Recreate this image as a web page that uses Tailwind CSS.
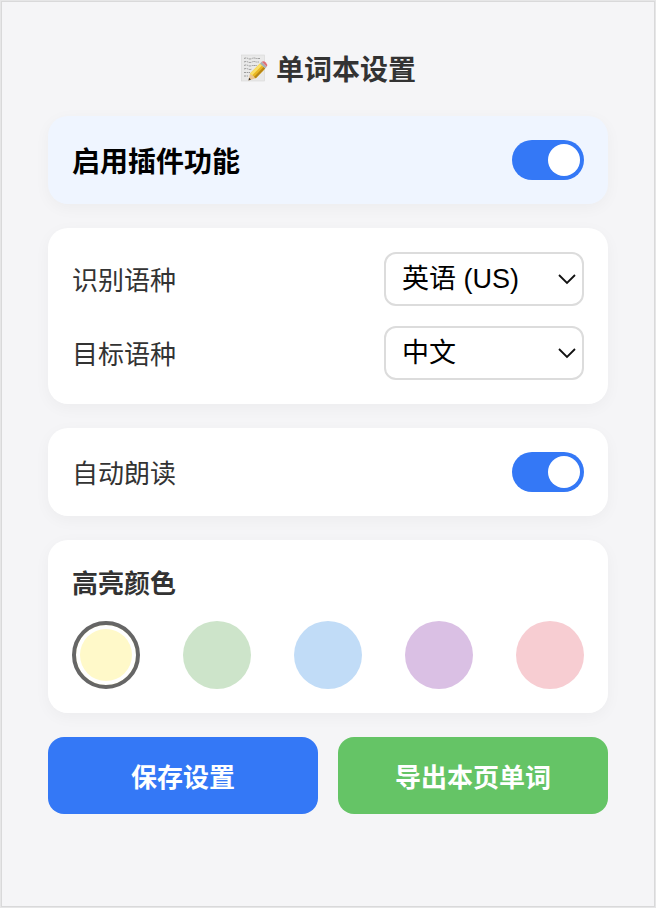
<!DOCTYPE html>
<html lang="zh-CN">
<head>
  <meta charset="UTF-8">
  <meta name="viewport" content="width=device-width, initial-scale=1.0">
  <title>单词本设置</title>
  <script src="https://cdn.jsdelivr.net/npm/@tailwindcss/browser@4"></script>
</head>
<body class="bg-[#e6e6e7] min-h-screen flex flex-col p-px font-['Noto_Sans_CJK_SC',sans-serif] text-[#333]">
  <main class="flex-grow bg-[#f5f5f7] border border-[#d9d9da] px-[46px] pt-[46px] pb-12">
    <!-- Title -->
    <h1 class="flex items-center justify-center gap-2 mb-7 text-[28px] leading-10 font-bold">
      <svg class="w-7 h-7" viewBox="0 0 28 28" aria-hidden="true">
        <rect x="1.500" y="1" width="23" height="26" fill="#e9e9e9" stroke="#d6d6d6" stroke-width=".6" />
        <g fill="none" stroke="#888" stroke-width=".8" stroke-dasharray="2.200 .7 1.200 .6">
          <path d="M4 4.500q2-1 4 0t4 0t4 0h4" />
          <path d="M4 8q2-1 4 0t4 0t4 0h3" />
          <path d="M4 11.500q2-1 4 0t4 0h5" />
          <path d="M4 15q2-1 4 0t4 0" />
          <path d="M4 18.500h6M4 22h4" />
        </g>
        <path d="M8.500 26.500l1.500-7 5.800 4.800z" fill="#ecc590" />
        <path d="M8.500 26.500l.6-2.700 1.900 1.600z" fill="#3b3328" />
        <path d="M10 19.500L20 9.500l5.200 5L15.800 24.300z" fill="#e9b622" />
        <path d="M10 19.500L20 9.500l2 1.900L12.200 21.300z" fill="#f9df67" />
        <path d="M14 22.900L23.600 13l1.600 1.500L15.800 24.300z" fill="#b98714" />
        <path d="M20 9.500l1.700-1.700 5.100 5-1.600 1.700z" fill="#a9b1b4" />
        <path d="M21.700 7.800q2-1.400 4.100.6t1 4.400z" fill="#e07077" />
      </svg>
      单词本设置
    </h1>

    <form class="flex flex-col gap-6">
      <!-- Master switch -->
      <section class="flex items-center justify-between bg-[#eff5ff] rounded-[20px] p-6 shadow-[0_4px_16px_rgba(0,0,0,0.04)]">
        <label for="enablePlugin" class="text-[28px] leading-10 font-bold text-black">启用插件功能</label>
        <input id="enablePlugin" type="checkbox" checked class="appearance-none w-[72px] h-10 p-1 rounded-full bg-[#ccc] checked:bg-[#3478f6] flex checked:justify-end before:content-[''] before:w-8 before:h-8 before:rounded-full before:bg-white cursor-pointer">
      </section>

      <!-- Languages -->
      <section class="flex flex-col gap-5 bg-white rounded-[20px] p-6 shadow-[0_4px_16px_rgba(0,0,0,0.04)]">
        <div class="flex items-center justify-between">
          <label for="sourceLang" class="text-[26px] leading-10">识别语种</label>
          <div class="relative">
            <select id="sourceLang" class="block appearance-none w-[200px] h-[54px] pl-4 pr-10 bg-white border-2 border-[#dcdcdc] rounded-xl font-['Liberation_Sans','Noto_Sans_CJK_SC',sans-serif] text-[27px] text-black">
              <option>英语 (US)</option>
              <option>英语 (UK)</option>
            </select>
            <svg class="absolute right-2 top-5 w-[18px] h-4 pointer-events-none" viewBox="0 0 18 16" fill="none" stroke="#111" stroke-width="1.800" aria-hidden="true"><path d="M1 3l8 8 8-8" /></svg>
          </div>
        </div>
        <div class="flex items-center justify-between">
          <label for="targetLang" class="text-[26px] leading-10">目标语种</label>
          <div class="relative">
            <select id="targetLang" class="block appearance-none w-[200px] h-[54px] pl-4 pr-10 bg-white border-2 border-[#dcdcdc] rounded-xl font-['Liberation_Sans','Noto_Sans_CJK_SC',sans-serif] text-[27px] text-black">
              <option>中文</option>
              <option>英语</option>
            </select>
            <svg class="absolute right-2 top-5 w-[18px] h-4 pointer-events-none" viewBox="0 0 18 16" fill="none" stroke="#111" stroke-width="1.800" aria-hidden="true"><path d="M1 3l8 8 8-8" /></svg>
          </div>
        </div>
      </section>

      <!-- Auto read -->
      <section class="flex items-center justify-between bg-white rounded-[20px] p-6 shadow-[0_4px_16px_rgba(0,0,0,0.04)]">
        <label for="autoRead" class="text-[26px] leading-10">自动朗读</label>
        <input id="autoRead" type="checkbox" checked class="appearance-none w-[72px] h-10 p-1 rounded-full bg-[#ccc] checked:bg-[#3478f6] flex checked:justify-end before:content-[''] before:w-8 before:h-8 before:rounded-full before:bg-white cursor-pointer">
      </section>

      <!-- Highlight color -->
      <fieldset class="bg-white rounded-[20px] p-6 shadow-[0_4px_16px_rgba(0,0,0,0.04)]" aria-labelledby="colorTitle">
        <h2 id="colorTitle" class="mb-[21px] text-[26px] leading-9 font-bold">高亮颜色</h2>
        <div class="flex justify-between">
          <input type="radio" name="color" aria-label="黄色" checked class="appearance-none w-[68px] h-[68px] rounded-full bg-[#fff9c9] checked:border-4 checked:border-[#666] checked:shadow-[inset_0_0_0_4px_#fff] cursor-pointer">
          <input type="radio" name="color" aria-label="绿色" class="appearance-none w-[68px] h-[68px] rounded-full bg-[#cde4ca] checked:border-4 checked:border-[#666] checked:shadow-[inset_0_0_0_4px_#fff] cursor-pointer">
          <input type="radio" name="color" aria-label="蓝色" class="appearance-none w-[68px] h-[68px] rounded-full bg-[#c1dcf7] checked:border-4 checked:border-[#666] checked:shadow-[inset_0_0_0_4px_#fff] cursor-pointer">
          <input type="radio" name="color" aria-label="紫色" class="appearance-none w-[68px] h-[68px] rounded-full bg-[#dac0e4] checked:border-4 checked:border-[#666] checked:shadow-[inset_0_0_0_4px_#fff] cursor-pointer">
          <input type="radio" name="color" aria-label="粉色" class="appearance-none w-[68px] h-[68px] rounded-full bg-[#f7cdd2] checked:border-4 checked:border-[#666] checked:shadow-[inset_0_0_0_4px_#fff] cursor-pointer">
        </div>
      </fieldset>

      <!-- Actions -->
      <div class="grid grid-cols-2 gap-5">
        <button type="button" class="py-5 rounded-2xl bg-[#3478f6] hover:bg-[#2a6ae0] text-white text-[26px] leading-[37px] font-bold transition">保存设置</button>
        <button type="button" class="py-5 rounded-2xl bg-[#65c466] hover:bg-[#57b358] text-white text-[26px] leading-[37px] font-bold transition">导出本页单词</button>
      </div>
    </form>
  </main>
</body>
</html>
